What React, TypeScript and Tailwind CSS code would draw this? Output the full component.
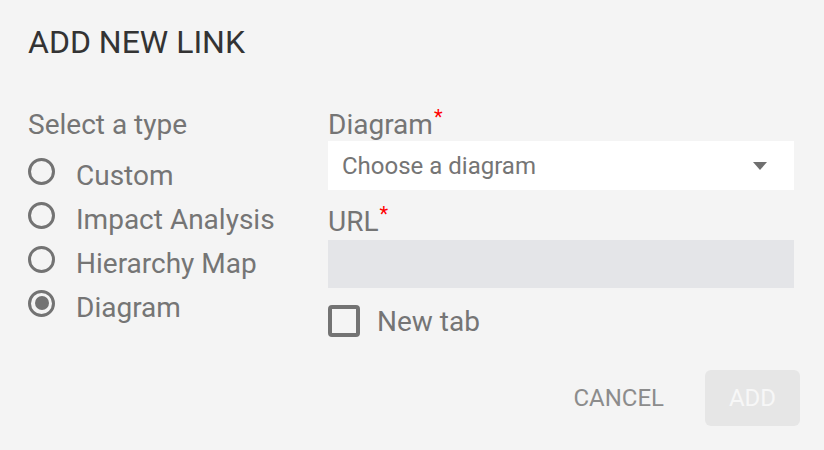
import { useState } from 'react';

const types = ['Custom', 'Impact Analysis', 'Hierarchy Map', 'Diagram'];

// Material-style radio dot
function Radio({ checked }: { checked: boolean }) {
  return (
    <span className="flex h-[27px] w-[27px] shrink-0 -translate-y-[4px] items-center justify-center rounded-full border-[3px] border-[#737373]">
      {checked && <span className="h-[14px] w-[14px] rounded-full bg-[#737373]" />}
    </span>
  );
}

function Label({ text }: { text: string }) {
  return (
    <div className="h-[27px] text-[28px] leading-[27px] text-[#757575]">
      {text}
      <span className="relative -top-[10px] ml-[1px] text-[20px] text-[#ff0000]">*</span>
    </div>
  );
}

export default function App() {
  const [selected, setSelected] = useState('Diagram');
  const [newTab, setNewTab] = useState(false);

  return (
    <div
      className="h-[450px] w-[824px] bg-[#f4f4f4] pt-[26px]"
      style={{ fontFamily: 'Roboto, "Liberation Sans", sans-serif' }}
    >
      <h1 className="pl-[28px] text-[32px] leading-[32px] text-[#333333]">ADD NEW LINK</h1>

      <div className="mt-[53px] flex pl-[28px]">
        {/* Type list */}
        <div className="w-[300px]">
          <div className="h-[27px] text-[28px] leading-[27px] text-[#757575]">Select a type</div>
          <div className="mt-[15px] flex flex-col">
            {types.map((t) => (
              <button
                key={t}
                onClick={() => setSelected(t)}
                className="flex h-[44px] items-center gap-[21px] text-left"
              >
                <Radio checked={selected === t} />
                <span className="text-[28px] leading-[27px] text-[#757575]">{t}</span>
              </button>
            ))}
          </div>
        </div>

        {/* Fields */}
        <div className="w-[466px]">
          <Label text="Diagram" />
          <div className="mt-[3px] flex h-[49px] items-center justify-between bg-white pl-[14px] pr-[27px]">
            <span className="text-[24px] leading-[24px] text-[#757575]">Choose a diagram</span>
            <svg width="14" height="8" viewBox="0 0 14 8">
              <path d="M0 0h14L7 8z" fill="#6f6f6f" />
            </svg>
          </div>

          <div className="mt-[18px]">
            <Label text="URL" />
          </div>
          <div className="mt-[5px] h-[48px] bg-[#e4e5e8]" />

          <button
            onClick={() => setNewTab(!newTab)}
            className="mt-[17px] flex items-center gap-[17px]"
          >
            <span className="h-[32px] w-[32px] rounded-[4px] border-[4px] border-[#737373]" />
            <span className="text-[28px] leading-[27px] text-[#757575]">New tab</span>
          </button>
        </div>
      </div>

      <div className="mt-[33px] flex justify-end gap-[25px] pr-[24px]">
        <button className="h-[56px] px-[16px] text-[24px] text-[#8c8c8c]">CANCEL</button>
        <button className="h-[56px] w-[95px] rounded-[6px] bg-[#e6e6e6] text-[24px] text-[#f7f7f7]">
          ADD
        </button>
      </div>
    </div>
  );
}
